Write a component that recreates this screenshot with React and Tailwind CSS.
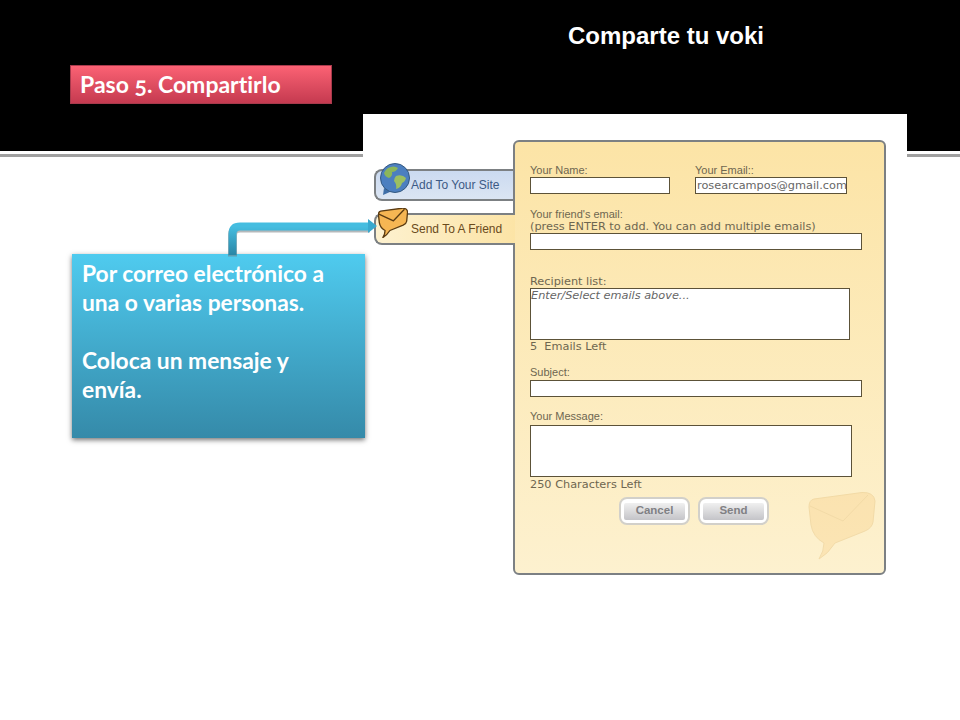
import React from "react";

const sans = "font-['Liberation_Sans',Arial,sans-serif]";
const verdana = "font-['DejaVu_Sans',Verdana,sans-serif]";
const lato = "font-['Lato','Open_Sans',sans-serif]";

function Envelope({ className, stroke = "#5a3b12", strokeWidth = 3 }) {
  return (
    <svg viewBox="0 0 68 68" className={className}>
      <path
        d="M6 7 L54 0.5 Q66 0 67 9 L65 30 Q64 36 57 39 L27 51 Q20 62 11 67 Q16 59 16 51 Q5 45 3 33 L1 15 Q1 8 6 7 Z"
        fill="#f6b653"
        stroke={stroke}
        strokeWidth={strokeWidth}
        strokeLinejoin="round"
      />
      <path d="M2 14 L35 29 L60 3" fill="none" stroke={stroke} strokeWidth={strokeWidth} strokeLinejoin="round" />
    </svg>
  );
}

function Globe({ className }) {
  return (
    <svg viewBox="0 0 32 34" className={className}>
      <path d="M5 25 L4 32 L12 28.5 Z" fill="#3f6fa8" />
      <circle cx="16" cy="15" r="14.5" fill="#4c7fc0" stroke="#33587f" strokeWidth="1" />
      <path d="M9 5 Q15 2 19 5 Q17 9 13 9 Q14 13 10 15 Q6 14 5 10 Q6 7 9 5 Z" fill="#8cb65a" />
      <path d="M17 13 Q23 11 27 15 Q26 19 23 20 Q22 25 17 26 Q18 21 15 18 Q15 15 17 13 Z" fill="#9cbf62" />
    </svg>
  );
}

function Field({ className }) {
  return <div className={"border border-[#5c5238] bg-white " + className} />;
}

function Label({ children, className = "" }) {
  return <div className={sans + " text-[11px] leading-[11px] pb-[1px] text-[#6e6650] " + className}>{children}</div>;
}

function Note({ children, className = "" }) {
  return <div className={verdana + " text-[11.3px] leading-[12px] text-[#6e6650] whitespace-pre " + className}>{children}</div>;
}

function FormButton({ label }) {
  return (
    <div className="w-[71px] h-[28px] rounded-[8px] border-2 border-[#d2d0ca] bg-white flex items-center justify-center">
      <div className={sans + " w-[61px] h-[17px] rounded-[2px] bg-gradient-to-b from-[#f0f0f0] to-[#c4c4c8] flex items-center justify-center text-[11.5px] font-bold text-[#808084]"}>
        {label}
      </div>
    </div>
  );
}

function SendForm() {
  return (
    <div className="relative mt-[26px] w-[373px] h-[435px] shrink-0 rounded-[6px] border-2 border-[#7c8083] bg-gradient-to-b from-[#fce4a6] to-[#fdf1cf] pl-[15px] pt-[23px]">
      <div className="flex">
        <div className="w-[165px]">
          <Label>Your Name:</Label>
          <Field className="w-[140px] h-[17px]" />
        </div>
        <div>
          <Label>Your Email::</Label>
          <div className={verdana + " w-[152px] h-[17px] border border-[#5c5238] bg-white text-[11.3px] leading-[15px] pl-[1px] text-[#666] overflow-hidden whitespace-nowrap"}>
            rosearcampos@gmail.com
          </div>
        </div>
      </div>
      <Label className="mt-[15px]">Your friend's email:</Label>
      <Note>(press ENTER to add. You can add multiple emails)</Note>
      <Field className="w-[332px] h-[17px]" />
      <Note className="mt-[26px]">Recipient list:</Note>
      <div className={verdana + " w-[320px] h-[52px] border border-[#5c5238] bg-white text-[11.3px] leading-[14px] italic text-[#666]"}>
        Enter/Select emails above...
      </div>
      <Note className="mt-[1px]">5  Emails Left</Note>
      <Label className="mt-[14px]">Subject:</Label>
      <Field className="w-[332px] h-[17px] mt-[1px]" />
      <Label className="mt-[14px] mb-[2px]">Your Message:</Label>
      <Field className="w-[322px] h-[52px]" />
      <Note className="mt-[2px]">250 Characters Left</Note>
      <div className="flex gap-[8px] ml-[89px] mt-[6px]">
        <FormButton label="Cancel" />
        <FormButton label="Send" />
      </div>
      <Envelope className="absolute left-[293px] top-[350px] w-[68px] h-[68px] opacity-20" stroke="#c98a20" strokeWidth={1} />
    </div>
  );
}

function Tabs() {
  return (
    <div className="flex flex-col gap-[12px] pt-[55px] w-[139px] shrink-0">
      <div className={sans + " relative w-[139px] h-[32px] rounded-l-[8px] border-2 border-r-0 border-[#7c8083] bg-gradient-to-b from-[#cbdaf0] to-[#dbe5f3] pl-[35px] text-[12px] leading-[28px] text-[#3d5a85] whitespace-nowrap"}>
        Add To Your Site
        <Globe className="absolute left-[3px] top-[-8px] w-[32px] h-[34px]" />
      </div>
      <div className={sans + " relative z-10 w-[141px] h-[32px] rounded-l-[8px] border-2 border-r-0 border-[#7c8083] bg-gradient-to-r from-[#fdf1cf] to-[#fce4a6] pl-[35px] text-[12px] leading-[28px] text-[#6a4a1c] whitespace-nowrap"}>
        Send To A Friend
        <Envelope className="absolute left-[2px] top-[-7px] w-[30px] h-[30px]" />
      </div>
    </div>
  );
}

export default function App() {
  return (
    <div className="w-[960px] h-[720px] overflow-hidden bg-white">
      <header className="h-[151px] bg-black flex">
        <div className="pl-[70px] pt-[65px]">
          <div className={lato + " w-[262px] h-[39px] border border-[#a83a4c] bg-gradient-to-b from-[#fb6274] to-[#c53a50] flex items-center pl-[9px] text-white text-[23px] font-bold oldstyle-nums [font-variant-ligatures:none]"}>
            Paso 5. Compartirlo
          </div>
        </div>
        <div className={sans + " ml-[236px] pt-[23px] text-white text-[24px] font-bold leading-[26px]"}>
          Comparte tu voki
        </div>
      </header>
      <div className="h-[3px] mt-[3px] bg-[#a0a0a0]" />

      <main className="flex -mt-[43px]">
        <div className="relative z-20 w-[363px] shrink-0 pl-[72px] pt-[98px]">
          <svg className="ml-[148px] w-[160px] h-[42px] block overflow-visible" viewBox="0 0 160 42">
            <defs>
              <linearGradient id="stem" x1="0" y1="0" x2="0" y2="1">
                <stop offset="0" stopColor="#45bde0" />
                <stop offset="1" stopColor="#2a86a6" />
              </linearGradient>
            </defs>
            <path d="M12.5 43 V22 Q12.5 14.5 20 14.5 H150" fill="none" stroke="#6b7378" strokeOpacity="0.5" strokeWidth="9" transform="translate(0 1.5)" />
            <path d="M12.5 43 V22 Q12.5 14.5 20 14.5 H150" fill="none" stroke="url(#stem)" strokeWidth="8" />
            <path d="M148 7 L157 14 L148 21 Z" fill="#38a9cf" />
          </svg>
          <div className={lato + " w-[293px] h-[184px] bg-gradient-to-b from-[#4fcbef] to-[#358aa9] shadow-[0_2px_5px_rgba(0,0,0,0.55)] pl-[10px] pr-[20px] text-white text-[22.8px] font-bold leading-[29px] pt-[5px] [font-variant-ligatures:none]"}>
            <p>Por correo electrónico a una o varias personas.</p>
            <p className="mt-[29px]">Coloca un mensaje y envía.</p>
          </div>
        </div>

        {/* pasted screenshot of the voki dialog */}
        <div className="relative z-10 flex w-[544px] h-[606px] bg-white pl-[11px]">
          <Tabs />
          <SendForm />
        </div>
      </main>
    </div>
  );
}
